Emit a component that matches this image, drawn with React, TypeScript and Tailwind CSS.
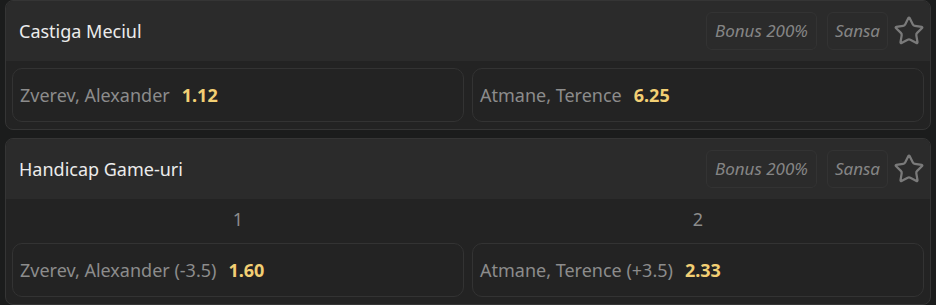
import { Star } from "lucide-react";

type Outcome = { name: string; odd: string };

function Market({ title, labels, outcomes }: { title: string; labels?: string[]; outcomes: Outcome[] }) {
  return (
    <div className="rounded-lg border border-[#353535] bg-[#232323] overflow-hidden">
      <div className="flex items-center justify-between h-[60px] bg-[#2b2b2b] pl-[13px] pr-[5px]">
        <span className="text-[18px] text-[#ececec] mt-px">{title}</span>
        <div className="flex items-center">
          <div className="flex items-center gap-[10px]">
            <span className="h-[38px] px-[8px] flex items-center rounded-md border border-[#333] italic text-[17px] text-[#858585]">
              Bonus 200%
            </span>
            <span className="h-[38px] px-[7px] flex items-center rounded-md border border-[#333] italic text-[17px] text-[#858585]">
              Sansa
            </span>
          </div>
          <Star className="ml-[5px] w-[32px] h-[32px] text-[#7a7a7a]" strokeWidth={1.7} />
        </div>
      </div>
      {labels && (
        <div className="grid grid-cols-2 gap-[8px] px-[6px] h-[44px] items-center">
          {labels.map((l) => (
            <div key={l} className="text-center text-[18px] text-[#8c8c8c] -mt-1">
              {l}
            </div>
          ))}
        </div>
      )}
      <div className={`grid grid-cols-2 gap-[8px] px-[6px] pb-[7px] ${labels ? "" : "pt-[7px]"}`}>
        {outcomes.map((o) => (
          <div
            key={o.name}
            className="h-[54px] flex items-center gap-[12px] rounded-[10px] border border-[#333] px-[7px] text-[18px]"
          >
            <span className="text-[#8c8c8c]">{o.name}</span>
            <span className="font-bold text-[#f2cf74]">{o.odd}</span>
          </div>
        ))}
      </div>
    </div>
  );
}

export default function App() {
  return (
    <div className="min-h-screen bg-[#1b1c1c] px-[5px] pb-2 flex flex-col gap-[8px] font-['Noto_Sans',sans-serif]">
      <Market
        title="Castiga Meciul"
        outcomes={[
          { name: "Zverev, Alexander", odd: "1.12" },
          { name: "Atmane, Terence", odd: "6.25" },
        ]}
      />
      <Market
        title="Handicap Game-uri"
        labels={["1", "2"]}
        outcomes={[
          { name: "Zverev, Alexander (-3.5)", odd: "1.60" },
          { name: "Atmane, Terence (+3.5)", odd: "2.33" },
        ]}
      />
    </div>
  );
}
